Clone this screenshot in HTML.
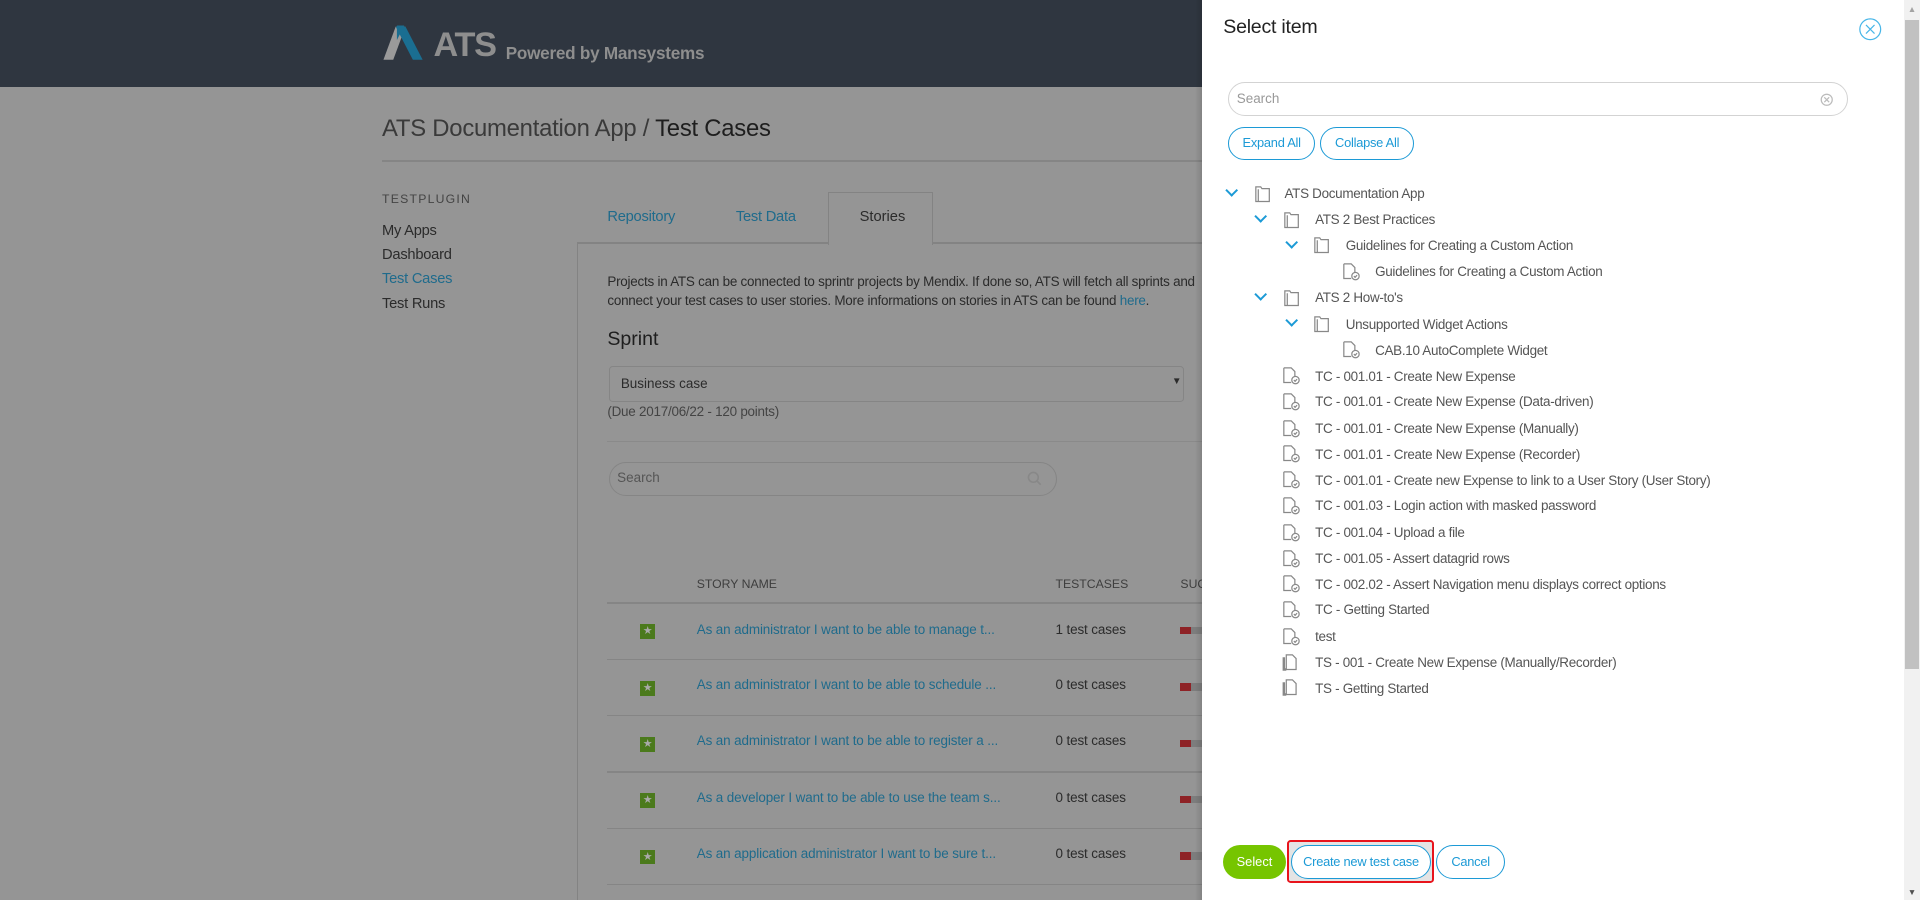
<!DOCTYPE html>
<html><head><meta charset="utf-8"><style>
html,body{margin:0;padding:0;overflow:hidden;background:#959595}
body{zoom:1.22449;width:1568px;height:735px;position:relative;font-family:"Liberation Sans",Arial,sans-serif;color:#2b2b2b}
.a{position:absolute;white-space:nowrap}
.hdr{left:0;top:0;width:982px;height:71px;background:#2f3640}
.link{color:#1f6b8c}
.row{font-size:11px;letter-spacing:-0.1px}
.panel{left:982px;top:0;width:573px;height:735px;background:#fff;color:#555}
.sb{left:1555px;top:0;width:13px;height:735px;background:#f1f1f1}
.btn{position:absolute;border:1px solid #1c9ad6;border-radius:14px;color:#1c9ad6;font-size:10.5px;text-align:center;box-sizing:border-box;background:#fff;letter-spacing:-0.2px}
.t{position:absolute;font-size:11px;letter-spacing:-0.25px;color:#555;white-space:nowrap}
.chev{position:absolute;width:6px;height:6px;border-right:2px solid #1c9ad6;border-bottom:2px solid #1c9ad6;transform:rotate(45deg)}
</style></head><body>
<div class="a hdr"></div>
<svg class="a" style="left:311px;top:19px" width="40" height="32"><polygon points="2,30 12,3 20,3 10,30" fill="#9a9a9a"/><polygon points="12,3 20,3 34,30 26,30" fill="#1a6e91"/><polygon points="13,2 19,2 13,14" fill="#1a6e91"/></svg>
<div class="a" style="left:354px;top:21px;font-size:28px;font-weight:bold;color:#8e8e8e;letter-spacing:-1px">ATS</div>
<div class="a" style="left:413px;top:35px;font-size:14px;font-weight:bold;color:#8e8e8e;letter-spacing:-0.2px">Powered by Mansystems</div>

<div class="a" style="left:312px;top:94px;font-size:19.5px;color:#3a3a3a;letter-spacing:-0.2px">ATS Documentation App / <span style="color:#1e1e1e">Test Cases</span></div>
<div class="a" style="left:312px;top:131px;width:670px;height:1px;background:#858585"></div>
<div class="a" style="left:312px;top:157px;font-size:10px;letter-spacing:1px;color:#444">TESTPLUGIN</div>
<div class="a" style="left:312px;top:179px;font-size:12px;line-height:19.7px;letter-spacing:-0.2px">My Apps<br>Dashboard<br><span class="link">Test Cases</span><br>Test Runs</div>

<div class="a link" style="left:496px;top:171px;font-size:12px;letter-spacing:-0.2px">Repository</div>
<div class="a link" style="left:601px;top:171px;font-size:12px;letter-spacing:-0.2px">Test Data</div>
<div class="a" style="left:676px;top:157px;width:84px;height:42px;border:1px solid #838383;border-bottom:none;background:#959595"></div>
<div class="a" style="left:702px;top:171px;font-size:12px">Stories</div>
<div class="a" style="left:472px;top:198px;width:204px;height:1px;background:#838383"></div>
<div class="a" style="left:761px;top:198px;width:221px;height:1px;background:#838383"></div>
<div class="a" style="left:471px;top:198px;width:1px;height:537px;background:#838383"></div>
<div class="a" style="left:496px;top:223px;font-size:11px;line-height:15.5px;letter-spacing:-0.2px">Projects in ATS can be connected to sprintr projects by Mendix. If done so, ATS will fetch all sprints and<br>connect your test cases to user stories. More informations on stories in ATS can be found <span class="link">here</span>.</div>
<div class="a" style="left:496px;top:268px;font-size:16px;color:#1e1e1e">Sprint</div>
<div class="a" style="left:497px;top:299px;width:470px;height:29px;border:1px solid #858585;border-radius:3px;box-sizing:border-box"></div>
<div class="a" style="left:507px;top:307px;font-size:11px">Business case</div>
<div class="a" style="left:957px;top:307px;font-size:8px">▼</div>
<div class="a" style="left:496px;top:330px;font-size:11px;color:#444;letter-spacing:-0.2px">(Due 2017/06/22 - 120 points)</div>
<div class="a" style="left:496px;top:360px;width:486px;height:1px;background:#8a8a8a"></div>
<div class="a" style="left:497px;top:377px;width:366px;height:28px;border:1px solid #858585;border-radius:14px;box-sizing:border-box"></div>
<div class="a" style="left:504px;top:384px;font-size:11px;color:#555">Search</div>
<svg class="a" style="left:838px;top:384px" width="14" height="14"><circle cx="6" cy="6" r="4" fill="none" stroke="#888" stroke-width="1.3"/><line x1="9" y1="9" x2="12" y2="12" stroke="#888" stroke-width="1.3"/></svg>
<div class="a" style="left:569px;top:471px;font-size:10px;color:#3e3e3e">STORY NAME</div>
<div class="a" style="left:862px;top:471px;font-size:10px;color:#3e3e3e">TESTCASES</div>
<div class="a" style="left:964px;top:471px;font-size:10px;color:#3e3e3e">SUC</div>
<div class="a" style="left:496px;top:492px;width:486px;height:1px;background:#858585"></div>
<div class="a" style="left:496px;top:538px;width:486px;height:1px;background:#858585"></div>
<div class="a" style="left:496px;top:584px;width:486px;height:1px;background:#858585"></div>
<div class="a" style="left:496px;top:630px;width:486px;height:1px;background:#858585"></div>
<div class="a" style="left:496px;top:676px;width:486px;height:1px;background:#858585"></div>
<div class="a" style="left:496px;top:722px;width:486px;height:1px;background:#858585"></div>

<div class="a" style="left:523px;top:510px;width:12px;height:12px;background:#4b7a1c;color:#aaa;font-size:9px;text-align:center;line-height:12px">★</div>
<div class="a link row" style="left:569px;top:508px">As an administrator I want to be able to manage t...</div>
<div class="a row" style="left:862px;top:508px">1 test cases</div>
<div class="a" style="left:964px;top:512px;width:9px;height:6px;background:#8e2226"></div><div class="a" style="left:973px;top:512px;width:9px;height:6px;background:#7d7d7d"></div>

<div class="a" style="left:523px;top:556px;width:12px;height:12px;background:#4b7a1c;color:#aaa;font-size:9px;text-align:center;line-height:12px">★</div>
<div class="a link row" style="left:569px;top:553px">As an administrator I want to be able to schedule ...</div>
<div class="a row" style="left:862px;top:553px">0 test cases</div>
<div class="a" style="left:964px;top:558px;width:9px;height:6px;background:#8e2226"></div><div class="a" style="left:973px;top:558px;width:9px;height:6px;background:#7d7d7d"></div>

<div class="a" style="left:523px;top:602px;width:12px;height:12px;background:#4b7a1c;color:#aaa;font-size:9px;text-align:center;line-height:12px">★</div>
<div class="a link row" style="left:569px;top:599px">As an administrator I want to be able to register a ...</div>
<div class="a row" style="left:862px;top:599px">0 test cases</div>
<div class="a" style="left:964px;top:604px;width:9px;height:6px;background:#8e2226"></div><div class="a" style="left:973px;top:604px;width:9px;height:6px;background:#7d7d7d"></div>

<div class="a" style="left:523px;top:648px;width:12px;height:12px;background:#4b7a1c;color:#aaa;font-size:9px;text-align:center;line-height:12px">★</div>
<div class="a link row" style="left:569px;top:645px">As a developer I want to be able to use the team s...</div>
<div class="a row" style="left:862px;top:645px">0 test cases</div>
<div class="a" style="left:964px;top:650px;width:9px;height:6px;background:#8e2226"></div><div class="a" style="left:973px;top:650px;width:9px;height:6px;background:#7d7d7d"></div>

<div class="a" style="left:523px;top:694px;width:12px;height:12px;background:#4b7a1c;color:#aaa;font-size:9px;text-align:center;line-height:12px">★</div>
<div class="a link row" style="left:569px;top:691px">As an application administrator I want to be sure t...</div>
<div class="a row" style="left:862px;top:691px">0 test cases</div>
<div class="a" style="left:964px;top:696px;width:9px;height:6px;background:#8e2226"></div><div class="a" style="left:973px;top:696px;width:9px;height:6px;background:#7d7d7d"></div>

<!-- panel -->
<div class="a panel"></div>
<div class="a" style="left:976px;top:0;width:6px;height:735px;background:linear-gradient(to right,rgba(0,0,0,0),rgba(0,0,0,0.12))"></div>
<div class="a sb"></div>
<div class="a" style="left:1556px;top:16px;width:11px;height:530px;background:#c1c1c1"></div>
<div class="a" style="left:1558px;top:3px;font-size:7px;color:#a3a3a3">▲</div>
<div class="a" style="left:1558px;top:724px;font-size:7px;color:#505050">▼</div>
<div class="a" style="left:999px;top:13px;font-size:16px;color:#222;letter-spacing:-0.2px">Select item</div>
<svg class="a" style="left:1517px;top:14px" width="20" height="20"><circle cx="10" cy="10" r="8.5" fill="none" stroke="#49b6e8" stroke-width="1"/><path d="M6.5 6.5 L13.5 13.5 M13.5 6.5 L6.5 13.5" stroke="#49b6e8" stroke-width="1"/></svg>
<div class="a" style="left:1003px;top:67px;width:506px;height:28px;border:1px solid #d3d3d3;border-radius:14px;box-sizing:border-box"></div>
<div class="a" style="left:1010px;top:74px;font-size:11px;color:#999">Search</div>
<svg class="a" style="left:1486px;top:76px" width="11" height="11"><circle cx="5.5" cy="5.5" r="4.5" fill="none" stroke="#bbb"/><path d="M3.5 3.5L7.5 7.5M7.5 3.5L3.5 7.5" stroke="#bbb"/></svg>
<div class="btn" style="left:1003px;top:104px;width:71px;height:27px;line-height:25px">Expand All</div>
<div class="btn" style="left:1078px;top:104px;width:77px;height:27px;line-height:25px">Collapse All</div>

<!-- tree -->
<div class="chev" style="left:1002px;top:152px"></div>
<svg class="a" style="left:1024px;top:151px" width="14" height="15"><path d="M1.5 1.5h4l1 1.5h6v10.5h-11z M3.5 3.5v10" fill="none" stroke="#888"/></svg>
<div class="t" style="left:1049px;top:152px">ATS Documentation App</div>
<div class="chev" style="left:1026px;top:173px"></div>
<svg class="a" style="left:1048px;top:172px" width="14" height="15"><path d="M1.5 1.5h4l1 1.5h6v10.5h-11z M3.5 3.5v10" fill="none" stroke="#888"/></svg>
<div class="t" style="left:1074px;top:173px">ATS 2 Best Practices</div>
<div class="chev" style="left:1051px;top:194px"></div>
<svg class="a" style="left:1072px;top:193px" width="14" height="15"><path d="M1.5 1.5h4l1 1.5h6v10.5h-11z M3.5 3.5v10" fill="none" stroke="#888"/></svg>
<div class="t" style="left:1099px;top:194px">Guidelines for Creating a Custom Action</div>
<svg class="a" style="left:1096px;top:214px" width="16" height="16"><path d="M1.5 1.5h6l3 3v4 M1.5 1.5v12h6" fill="none" stroke="#888"/><circle cx="11" cy="11.5" r="3" fill="none" stroke="#888"/><path d="M9.7 11.5l1 1 1.6-1.8" fill="none" stroke="#888"/></svg>
<div class="t" style="left:1123px;top:216px">Guidelines for Creating a Custom Action</div>
<div class="chev" style="left:1026px;top:237px"></div>
<svg class="a" style="left:1048px;top:236px" width="14" height="15"><path d="M1.5 1.5h4l1 1.5h6v10.5h-11z M3.5 3.5v10" fill="none" stroke="#888"/></svg>
<div class="t" style="left:1074px;top:237px">ATS 2 How-to's</div>
<div class="chev" style="left:1051px;top:258px"></div>
<svg class="a" style="left:1072px;top:257px" width="14" height="15"><path d="M1.5 1.5h4l1 1.5h6v10.5h-11z M3.5 3.5v10" fill="none" stroke="#888"/></svg>
<div class="t" style="left:1099px;top:259px">Unsupported Widget Actions</div>
<svg class="a" style="left:1096px;top:278px" width="16" height="16"><path d="M1.5 1.5h6l3 3v4 M1.5 1.5v12h6" fill="none" stroke="#888"/><circle cx="11" cy="11.5" r="3" fill="none" stroke="#888"/><path d="M9.7 11.5l1 1 1.6-1.8" fill="none" stroke="#888"/></svg>
<div class="t" style="left:1123px;top:280px">CAB.10 AutoComplete Widget</div>

<svg class="a" style="left:1047px;top:299px" width="16" height="16"><path d="M1.5 1.5h6l3 3v4 M1.5 1.5v12h6" fill="none" stroke="#888"/><circle cx="11" cy="11.5" r="3" fill="none" stroke="#888"/><path d="M9.7 11.5l1 1 1.6-1.8" fill="none" stroke="#888"/></svg>
<div class="t" style="left:1074px;top:301px">TC - 001.01 - Create New Expense</div>
<svg class="a" style="left:1047px;top:320px" width="16" height="16"><path d="M1.5 1.5h6l3 3v4 M1.5 1.5v12h6" fill="none" stroke="#888"/><circle cx="11" cy="11.5" r="3" fill="none" stroke="#888"/><path d="M9.7 11.5l1 1 1.6-1.8" fill="none" stroke="#888"/></svg>
<div class="t" style="left:1074px;top:322px">TC - 001.01 - Create New Expense (Data-driven)</div>
<svg class="a" style="left:1047px;top:342px" width="16" height="16"><path d="M1.5 1.5h6l3 3v4 M1.5 1.5v12h6" fill="none" stroke="#888"/><circle cx="11" cy="11.5" r="3" fill="none" stroke="#888"/><path d="M9.7 11.5l1 1 1.6-1.8" fill="none" stroke="#888"/></svg>
<div class="t" style="left:1074px;top:344px">TC - 001.01 - Create New Expense (Manually)</div>
<svg class="a" style="left:1047px;top:363px" width="16" height="16"><path d="M1.5 1.5h6l3 3v4 M1.5 1.5v12h6" fill="none" stroke="#888"/><circle cx="11" cy="11.5" r="3" fill="none" stroke="#888"/><path d="M9.7 11.5l1 1 1.6-1.8" fill="none" stroke="#888"/></svg>
<div class="t" style="left:1074px;top:365px">TC - 001.01 - Create New Expense (Recorder)</div>
<svg class="a" style="left:1047px;top:384px" width="16" height="16"><path d="M1.5 1.5h6l3 3v4 M1.5 1.5v12h6" fill="none" stroke="#888"/><circle cx="11" cy="11.5" r="3" fill="none" stroke="#888"/><path d="M9.7 11.5l1 1 1.6-1.8" fill="none" stroke="#888"/></svg>
<div class="t" style="left:1074px;top:386px">TC - 001.01 - Create new Expense to link to a User Story (User Story)</div>
<svg class="a" style="left:1047px;top:405px" width="16" height="16"><path d="M1.5 1.5h6l3 3v4 M1.5 1.5v12h6" fill="none" stroke="#888"/><circle cx="11" cy="11.5" r="3" fill="none" stroke="#888"/><path d="M9.7 11.5l1 1 1.6-1.8" fill="none" stroke="#888"/></svg>
<div class="t" style="left:1074px;top:407px">TC - 001.03 - Login action with masked password</div>
<svg class="a" style="left:1047px;top:427px" width="16" height="16"><path d="M1.5 1.5h6l3 3v4 M1.5 1.5v12h6" fill="none" stroke="#888"/><circle cx="11" cy="11.5" r="3" fill="none" stroke="#888"/><path d="M9.7 11.5l1 1 1.6-1.8" fill="none" stroke="#888"/></svg>
<div class="t" style="left:1074px;top:429px">TC - 001.04 - Upload a file</div>
<svg class="a" style="left:1047px;top:448px" width="16" height="16"><path d="M1.5 1.5h6l3 3v4 M1.5 1.5v12h6" fill="none" stroke="#888"/><circle cx="11" cy="11.5" r="3" fill="none" stroke="#888"/><path d="M9.7 11.5l1 1 1.6-1.8" fill="none" stroke="#888"/></svg>
<div class="t" style="left:1074px;top:450px">TC - 001.05 - Assert datagrid rows</div>
<svg class="a" style="left:1047px;top:469px" width="16" height="16"><path d="M1.5 1.5h6l3 3v4 M1.5 1.5v12h6" fill="none" stroke="#888"/><circle cx="11" cy="11.5" r="3" fill="none" stroke="#888"/><path d="M9.7 11.5l1 1 1.6-1.8" fill="none" stroke="#888"/></svg>
<div class="t" style="left:1074px;top:471px">TC - 002.02 - Assert Navigation menu displays correct options</div>
<svg class="a" style="left:1047px;top:490px" width="16" height="16"><path d="M1.5 1.5h6l3 3v4 M1.5 1.5v12h6" fill="none" stroke="#888"/><circle cx="11" cy="11.5" r="3" fill="none" stroke="#888"/><path d="M9.7 11.5l1 1 1.6-1.8" fill="none" stroke="#888"/></svg>
<div class="t" style="left:1074px;top:492px">TC - Getting Started</div>
<svg class="a" style="left:1047px;top:512px" width="16" height="16"><path d="M1.5 1.5h6l3 3v4 M1.5 1.5v12h6" fill="none" stroke="#888"/><circle cx="11" cy="11.5" r="3" fill="none" stroke="#888"/><path d="M9.7 11.5l1 1 1.6-1.8" fill="none" stroke="#888"/></svg>
<div class="t" style="left:1074px;top:514px">test</div>
<svg class="a" style="left:1047px;top:533px" width="14" height="15"><path d="M3.5 1.5h5l3 3v9h-8z" fill="none" stroke="#888"/><path d="M1.5 3.5v10h2" fill="none" stroke="#888" stroke-width="2"/></svg>
<div class="t" style="left:1074px;top:535px">TS - 001 - Create New Expense (Manually/Recorder)</div>
<svg class="a" style="left:1047px;top:554px" width="14" height="15"><path d="M3.5 1.5h5l3 3v9h-8z" fill="none" stroke="#888"/><path d="M1.5 3.5v10h2" fill="none" stroke="#888" stroke-width="2"/></svg>
<div class="t" style="left:1074px;top:556px">TS - Getting Started</div>

<!-- bottom buttons -->
<div class="a" style="left:999px;top:690px;width:51px;height:28px;border-radius:14px;background:#76c500;color:#fff;font-size:10.5px;text-align:center;line-height:28px">Select</div>
<div class="a" style="left:1051px;top:686px;width:120px;height:35px;border:2px solid #e8141c;border-radius:3px;box-sizing:border-box;background:#e4e4e4"></div>
<div class="btn" style="left:1054px;top:690px;width:115px;height:28px;line-height:26px">Create new test case</div>
<div class="btn" style="left:1173px;top:690px;width:56px;height:28px;line-height:26px">Cancel</div>
</body></html>
